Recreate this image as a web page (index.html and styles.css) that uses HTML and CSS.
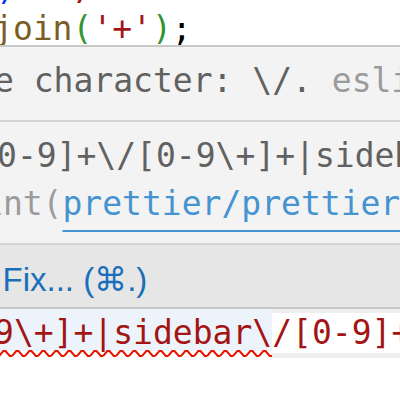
FILE: index.html
```html
<!DOCTYPE html>
<html lang="en">
<head>
    <meta charset="UTF-8">
    <link rel="stylesheet" href="styles.css">
</head>
<body>
    <div class="editor">
        <div class="code-top">
            <div class="line prev"><span class="br3">)</span>  <span class="str">'/'</span></div>
            <div class="line join">.<span class="fn">join</span><span class="br2">(</span><span class="str">'+'</span><span class="br2">)</span>;</div>
        </div>

        <div class="hover">
            <div class="diag first">
                <div class="msg msg-one">Unnecessary escape character: \/. <span class="src">eslint(no-useless-escape)</span></div>
            </div>
            <div class="diag second">
                <div class="msg msg-two">[0-9]+\/[0-9\+]+|sidebar\/[0-9]+</div>
                <div class="msg msg-three"><span class="src">eslint(<a class="link">prettier/prettier</a>)</span></div>
            </div>
            <div class="status">
                <span class="action">Quick Fix... (⌘.)</span>
            </div>
        </div>

        <div class="line current"><span class="hl">[0-9\+]+|sidebar\</span><span class="rest">/[0-9]+$/</span></div>
    </div>
</body>
</html>
```

FILE: styles.css
```css
* {
    margin: 0;
    padding: 0;
    box-sizing: border-box;
}

body {
    width: 400px;
    height: 400px;
    overflow: hidden;
    background: #ffffff;
}

.editor {
    font-family: "DejaVu Sans Mono", monospace;
    font-size: 33px;
    color: #000000;
}

.line,
.msg,
.action {
    white-space: pre;
}

.line {
    line-height: 40px;
}

.code-top {
    height: 45px;
    overflow: hidden;
}

.prev {
    margin-top: -31px;
    margin-left: -4px;
}

.join {
    margin-left: calc(-1ch - 7px);
}

.fn {
    color: #795e26;
}

.str {
    color: #a31515;
}

.br2 {
    color: #319331;
}

.br3 {
    color: #0431fa;
}

/* hover widget */
.hover {
    background: #f3f3f3;
    border-top: 2px solid #c8c8c8;
    border-bottom: 2px solid #c8c8c8;
    color: #616161;
}

.diag {
    overflow: hidden;
}

.first {
    height: 75px;
    padding-top: 14px;
    border-bottom: 2px solid #d4d4d4;
}

.second {
    height: 123px;
    padding-top: 10px;
    border-bottom: 2px solid #d4d4d4;
}

.first .msg {
    line-height: 40px;
}

.second .msg {
    line-height: 48px;
}

.msg-one {
    margin-left: calc(-17ch - 6px);
}

.msg-two {
    margin-left: calc(-1ch - 3px);
}

.msg-three {
    margin-left: calc(-3ch - 17px);
}

.src {
    color: #9b9b9b;
}

.link {
    color: #4593d0;
    text-decoration: underline;
    text-decoration-thickness: 2px;
    text-underline-offset: 15px;
}

.status {
    height: 62px;
    display: flex;
    align-items: center;
    background: #e6e6e6;
    font-family: "Liberation Sans", Arial, sans-serif;
    font-size: 33px;
}

.action {
    color: #1b6fba;
    margin-left: -91px;
    padding-top: 6px;
}

/* line under the hover */
.current {
    display: flex;
    height: 49px;
}

.hl {
    margin-left: calc(-3ch - 6px);
    padding-top: 4px;
    color: #a31515;
    background:
        url("data:image/svg+xml,%3Csvg xmlns='http://www.w3.org/2000/svg' width='13' height='9'%3E%3Cpath d='M0 7 L4.3 2 L6.5 2 L10.8 7 L13 7' stroke='%23e51400' stroke-width='2' fill='none'/%3E%3C/svg%3E") left bottom / 13px 9px repeat-x,
        linear-gradient(#edf3fb 0 42px, #ffffff 42px);
}

.rest {
    flex: 1;
    color: #a31515;
    border-top: 4px solid #eeeeee;
    border-bottom: 5px solid #eeeeee;
}
```
